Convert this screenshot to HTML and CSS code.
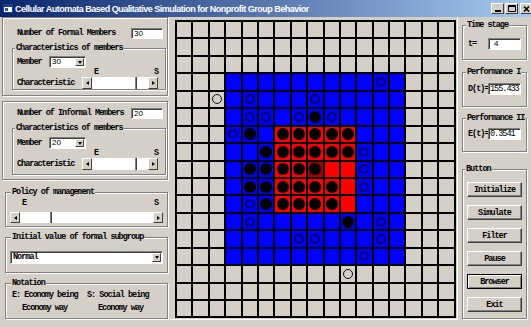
FILE: index.html
```html
<!DOCTYPE html>
<html lang="en">
<head>
    <meta charset="UTF-8">
    <title>Cellular Automata Based Qualitative Simulation for Nonprofit Group Behavior</title>
    <link rel="stylesheet" href="styles.css">
</head>
<body>
    <div class="titlebar">
        <svg class="app-icon" width="10" height="9" viewBox="0 0 10 9">
            <rect x="0.5" y="0.5" width="9" height="8" fill="#fff" stroke="#1c3e8c"/>
            <rect x="1" y="1" width="8" height="2" fill="#1c3e8c"/>
            <rect x="2" y="4" width="3" height="3" fill="#2a56c6"/>
        </svg>
        <span class="title">Cellular Automata Based Qualitative Simulation for Nonprofit Group Behavior</span>
        <div class="win-btns">
            <span class="wbtn"><svg width="6" height="6" viewBox="0 0 6 6"><rect x="0" y="4" width="6" height="2"/></svg></span>
            <span class="wbtn"><svg width="8" height="7" viewBox="0 0 8 7"><path d="M0.5 0.5h7v6h-7z M0.5 1.5h7" fill="none" stroke="#000"/></svg></span>
            <span class="wbtn close"><svg width="7" height="6" viewBox="0 0 7 6"><path d="M1 0.5l5 5M6 0.5l-5 5" stroke="#000" stroke-width="1.5"/></svg></span>
        </div>
    </div>

    <div class="main">
        <div class="left">
            <div class="box box-formal">
                <div class="count-row">
                    <span>Number of Formal Members</span>
                    <div class="field num">30</div>
                </div>
                <fieldset class="group members">
                    <legend>Characteristics of members</legend>
                    <div class="row">
                        <span class="lbl-member">Member</span>
                        <div class="field combo combo-small">
                            <span class="combo-text num">30</span>
                            <span class="combo-btn"><i class="tri-down"></i></span>
                        </div>
                    </div>
                    <div class="es es-members"><span>E</span><span>S</span></div>
                    <div class="row char-row">
                        <span class="lbl-char">Characteristic</span>
                        <div class="scroll scroll-char">
                            <span class="arrow"><i class="tri-left"></i></span>
                            <span class="track"><span class="thumb thumb-right"></span></span>
                            <span class="arrow"><i class="tri-right"></i></span>
                        </div>
                    </div>
                </fieldset>
            </div>

            <div class="box box-informal">
                <div class="count-row">
                    <span>Number of Informal Members</span>
                    <div class="field num">20</div>
                </div>
                <fieldset class="group members">
                    <legend>Characteristics of members</legend>
                    <div class="row">
                        <span class="lbl-member">Member</span>
                        <div class="field combo combo-small">
                            <span class="combo-text num">20</span>
                            <span class="combo-btn"><i class="tri-down"></i></span>
                        </div>
                    </div>
                    <div class="es es-members"><span>E</span><span>S</span></div>
                    <div class="row char-row">
                        <span class="lbl-char">Characteristic</span>
                        <div class="scroll scroll-char">
                            <span class="arrow"><i class="tri-left"></i></span>
                            <span class="track"><span class="thumb thumb-right"></span></span>
                            <span class="arrow"><i class="tri-right"></i></span>
                        </div>
                    </div>
                </fieldset>
            </div>

            <fieldset class="group side policy">
                <legend>Policy of management</legend>
                <div class="es es-policy"><span>E</span><span>S</span></div>
                <div class="scroll scroll-policy">
                    <span class="arrow"><i class="tri-left"></i></span>
                    <span class="track"><span class="thumb thumb-left"></span></span>
                    <span class="arrow"><i class="tri-right"></i></span>
                </div>
            </fieldset>

            <fieldset class="group side initial">
                <legend>Initial value of formal subgroup</legend>
                <div class="field combo combo-wide">
                    <span class="combo-text">Normal</span>
                    <span class="combo-btn"><i class="tri-down"></i></span>
                </div>
            </fieldset>

            <fieldset class="group side notation">
                <legend>Notation</legend>
                <div class="notes">
                    <span>E: Economy being</span>
                    <span>S: Social being</span>
                    <span class="way">Economy way</span>
                    <span class="way way-2">Economy way</span>
                </div>
            </fieldset>
        </div>

        <div class="board">
            <div class="grid" id="grid"></div>
        </div>

        <div class="right">
            <fieldset class="group rgroup time">
                <legend>Time stage</legend>
                <div class="vrow">
                    <span class="vlbl">t=</span>
                    <div class="field num num-t">4</div>
                </div>
            </fieldset>
            <fieldset class="group rgroup perf-1">
                <legend>Performance I</legend>
                <div class="vrow">
                    <span class="vlbl">D(t)=</span>
                    <div class="field val">155.433</div>
                </div>
            </fieldset>
            <fieldset class="group rgroup perf-2">
                <legend>Performance II</legend>
                <div class="vrow">
                    <span class="vlbl">E(t)=</span>
                    <div class="field val">0.3541</div>
                </div>
            </fieldset>
            <fieldset class="group rgroup buttons">
                <legend>Button</legend>
                <div class="btns">
                    <div class="btn">Initialize</div>
                    <div class="btn">Simulate</div>
                    <div class="btn">Filter</div>
                    <div class="btn">Pause</div>
                    <div class="btn btn-default">Browser</div>
                    <div class="btn">Exit</div>
                </div>
            </fieldset>
        </div>
    </div>

    <script>
        // . gray, o gray+ring, B blue, c blue+ring, k blue+dot, R red, x red+dot, X dark red+dot
        const rows = [
            ".................",
            ".................",
            ".................",
            "...BBBBBBBBBcB...",
            "..oBcBBBcBBBBB...",
            "...BccBckcBBBB...",
            "...ckBxxxxxBBB...",
            "...BBkxxxxxcBB...",
            "...BkkxxXRRcBB...",
            "...BkkxxxxRcBB...",
            "...BckxxxxRBBB...",
            "...BcBBBBBkBcB...",
            "...BBBBccBBBcB...",
            "...BBBBBBBBcBB...",
            "..........o......",
            ".................",
            "................."
        ];
        const kinds = {
            '.': ['g', ''], 'o': ['g', 'ring-k'],
            'B': ['b', ''], 'c': ['b', 'ring-n'], 'k': ['b', 'dot'],
            'R': ['r', ''], 'x': ['r', 'dot'], 'X': ['d', 'dot']
        };
        const grid = document.getElementById('grid');
        rows.forEach(function (row) {
            for (const ch of row) {
                const cell = document.createElement('div');
                cell.className = 'cell ' + kinds[ch][0];
                if (kinds[ch][1]) {
                    const mark = document.createElement('span');
                    mark.className = kinds[ch][1];
                    cell.appendChild(mark);
                }
                grid.appendChild(cell);
            }
        });
    </script>
</body>
</html>
```

FILE: styles.css
```css
* {
    margin: 0;
    padding: 0;
    box-sizing: border-box;
}

body {
    width: 531px;
    height: 327px;
    overflow: hidden;
    background: #d4d0c8;
    color: #000;
    font-family: 'Liberation Mono', monospace;
    font-size: 8.5px;
    font-weight: bold;
    letter-spacing: -1px;
    line-height: 10px;
}

/* title bar */
.titlebar {
    height: 17px;
    display: flex;
    align-items: center;
    padding-left: 3px;
    background: linear-gradient(to right, #0a246a, #a6caf0);
}

.app-icon {
    margin-right: 2px;
    flex-shrink: 0;
}

.title {
    flex: 1;
    color: #fff;
    font-family: 'Liberation Sans', Arial, sans-serif;
    font-size: 9px;
    letter-spacing: -0.5px;
    white-space: nowrap;
}

.win-btns {
    display: flex;
    gap: 1px;
    margin-right: -2px;
}

.wbtn {
    width: 13px;
    height: 11px;
    display: flex;
    align-items: center;
    justify-content: center;
    background: #d4d0c8;
    border: 1px solid;
    border-color: #fff #404040 #404040 #fff;
}

.wbtn.close {
    margin-left: 1px;
}

/* layout */
.main {
    display: flex;
}

.left {
    width: 170px;
    padding-left: 2px;
}

.right {
    width: 73px;
    padding-left: 4px;
}

.board {
    width: 288px;
    align-self: flex-start;
    padding: 3px 0 1px 5px;
    border-right: 1px solid #fff;
    border-bottom: 1px solid #fff;
}

/* etched frames */
.box,
.group {
    border: 1px solid #808080;
    box-shadow: inset 1px 1px #fff, 1px 1px #fff;
}

.group legend {
    padding: 0 1px;
    margin-left: -2px;
    margin-right: -20px;
    line-height: 10px;
    white-space: nowrap;
    background: #d4d0c8;
}

.box {
    width: 166px;
    height: 79px;
    padding: 9px 1px 0 9px;
}

.box-informal {
    margin-top: 5px;
    padding-top: 5px;
}

.count-row {
    display: flex;
    justify-content: space-between;
    align-items: center;
    height: 12px;
    padding: 0 3px 0 5px;
}

.count-row .field {
    width: 32px;
    height: 11px;
}

.members {
    margin-top: 4px;
    padding: 3px 0 0 4px;
}

.box-informal .members {
    padding-top: 4px;
    padding-bottom: 4px;
}

.row {
    display: flex;
    align-items: center;
    height: 12px;
}

.char-row {
    margin-top: 1px;
}

.lbl-member {
    width: 32px;
}

.lbl-char {
    width: 65px;
}

.es {
    display: flex;
    justify-content: space-between;
}

.es-members {
    width: 64px;
    height: 8px;
    line-height: 8px;
    margin-left: 77px;
}

.es-policy {
    width: 136px;
    height: 10px;
    margin: 1px 0 0 12px;
}

.side {
    width: 163px;
    margin-left: 3px;
    padding: 0 4px;
}

.side legend {
    margin-left: 1px;
}

.policy {
    margin-top: 7px;
    padding-bottom: 3px;
}

.initial {
    margin-top: 5px;
    padding-top: 9px;
    padding-bottom: 8px;
}

.notation {
    margin-top: 5px;
    padding-top: 1px;
    padding-bottom: 3px;
}

.notes {
    display: grid;
    grid-template-columns: 75px auto;
    line-height: 13px;
    margin-left: 2px;
}

.way {
    padding-left: 10px;
}

.way-2 {
    padding-left: 11px;
}

/* sunken fields */
.field {
    background: #fff;
    border: 1px solid;
    border-color: #808080 #fff #fff #808080;
    box-shadow: inset 1px 1px #404040;
    white-space: nowrap;
}

.num {
    font-family: 'Liberation Sans', Arial, sans-serif;
    font-size: 8px;
    font-weight: normal;
    letter-spacing: 0;
    line-height: 9px;
    padding-left: 2px;
}

.num-t {
    padding-left: 5px;
}

.val {
    font-weight: normal;
    line-height: 10px;
    padding-left: 1px;
}

.combo {
    display: flex;
    align-items: stretch;
}

.combo-small {
    width: 37px;
    height: 12px;
}

.combo-wide {
    width: 153px;
    height: 13px;
}

.combo-text {
    flex: 1;
    padding-left: 2px;
    line-height: 10px;
}

.combo-btn {
    width: 9px;
    margin: 1px 1px 1px 0;
    display: flex;
    align-items: center;
    justify-content: center;
    background: #d4d0c8;
    border: 1px solid;
    border-color: #fff #404040 #404040 #fff;
}

.tri-down {
    border-left: 2.5px solid transparent;
    border-right: 2.5px solid transparent;
    border-top: 3px solid #000;
}

.tri-left {
    border-top: 2.5px solid transparent;
    border-bottom: 2.5px solid transparent;
    border-right: 3px solid #000;
}

.tri-right {
    border-top: 2.5px solid transparent;
    border-bottom: 2.5px solid transparent;
    border-left: 3px solid #000;
}

/* scroll bars */
.scroll {
    display: flex;
    height: 12px;
    background: #fff;
}

.scroll-char {
    width: 76px;
}

.scroll-policy {
    width: 153px;
    height: 11px;
    margin-top: 4px;
}

.scroll .arrow {
    width: 10px;
    display: flex;
    align-items: center;
    justify-content: center;
    background: #d4d0c8;
    border: 1px solid;
    border-color: #fff #404040 #404040 #fff;
}

.track {
    flex: 1;
    display: flex;
}

.thumb {
    width: 30px;
    border-right: 1px solid #404040;
    box-shadow: inset -1px 0 #808080;
}

.thumb-right {
    margin-left: 15px;
}

.thumb-left {
    width: 32px;
}

/* right column */
.rgroup {
    width: 65px;
    padding: 0 5px;
}

.time {
    margin-top: 3px;
    padding-top: 8px;
    padding-bottom: 9px;
}

.perf-1 {
    margin-top: 7px;
    padding-top: 6px;
    padding-bottom: 11px;
}

.perf-2 {
    margin-top: 6px;
    padding-top: 5px;
    padding-bottom: 11px;
}

.buttons {
    margin-top: 12px;
    padding: 8px 4px 6px;
}

.vrow {
    display: flex;
    align-items: center;
}

.vlbl {
    width: 20px;
    white-space: nowrap;
}

.vrow .field {
    width: 33px;
    height: 12px;
}

.btns {
    display: flex;
    flex-direction: column;
    gap: 8px;
}

.btn {
    width: 55px;
    height: 15px;
    display: flex;
    align-items: center;
    justify-content: center;
    border: 1px solid;
    border-color: #fff #404040 #404040 #fff;
    box-shadow: inset -1px -1px #808080;
}

.btn-default {
    border-color: #000;
    box-shadow: inset 1px 1px #fff, inset -1px -1px #808080;
}

/* automata grid */
.grid {
    display: grid;
    grid-template-columns: repeat(17, 14.4px);
    grid-template-rows: repeat(17, 15.45px);
    gap: 2px;
    padding: 2px;
    width: max-content;
    background: #000;
}

.cell {
    display: flex;
    align-items: center;
    justify-content: center;
}

.g { background: #d4d0c8; }
.b { background: #0000ff; }
.r { background: #ff0000; }
.d { background: #a30000; }

.dot {
    width: 12px;
    height: 12px;
    border-radius: 50%;
    background: #000;
}

.ring-n {
    width: 10px;
    height: 10px;
    border-radius: 50%;
    border: 2px solid #00005c;
}

.ring-k {
    width: 10px;
    height: 10px;
    border-radius: 50%;
    border: 1.5px solid #111;
}
```
